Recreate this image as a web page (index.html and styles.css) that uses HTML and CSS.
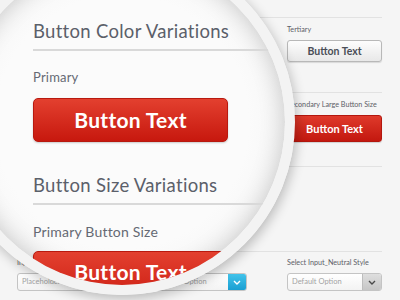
FILE: index.html
```html
<!DOCTYPE html>
<html lang="en">
<head>
    <meta charset="UTF-8">
    <meta name="viewport" content="width=device-width, initial-scale=1.0">
    <title>Button Styles</title>
    <link rel="stylesheet" href="styles.css">
</head>
<body>
    <div class="page">
        <!-- the first two columns sit under the lens -->
        <div class="row row-colors">
            <div class="field"></div>
            <div class="field"></div>
            <div class="field">
                <p class="label">Tertiary</p>
                <div class="btn btn-grey">Button Text</div>
            </div>
        </div>

        <div class="row row-sizes">
            <div class="field"></div>
            <div class="field"></div>
            <div class="field">
                <p class="label">Secondary Large Button Size</p>
                <div class="btn btn-red btn-large">Button Text</div>
            </div>
        </div>

        <div class="row row-blank"></div>

        <div class="row row-inputs">
            <div class="field">
                <p class="label">Input_Default Style</p>
                <div class="input">Placeholder Text</div>
            </div>
            <div class="field">
                <p class="label"></p>
                <div class="select">
                    <span class="select-text">Default Option</span>
                    <span class="select-arrow arrow-blue">
                        <svg width="8" height="5" viewBox="0 0 8 5"><path d="M1 1l3 3 3-3" fill="none" stroke="#fff" stroke-width="1.4"/></svg>
                    </span>
                </div>
            </div>
            <div class="field">
                <p class="label">Select Input_Neutral Style</p>
                <div class="select">
                    <span class="select-text">Default Option</span>
                    <span class="select-arrow arrow-grey">
                        <svg width="8" height="5" viewBox="0 0 8 5"><path d="M1 1l3 3 3-3" fill="none" stroke="#4a4a4a" stroke-width="1.4"/></svg>
                    </span>
                </div>
            </div>
        </div>
    </div>

    <!-- magnifying glass over the left part of the sheet -->
    <div class="lens">
        <div class="lens-view">
            <h2 class="lens-title">Button Color Variations</h2>
            <p class="lens-label">Primary</p>
            <div class="lens-btn">Button Text</div>

            <h2 class="lens-title title-second">Button Size Variations</h2>
            <p class="lens-label label-size">Primary Button Size</p>
            <div class="lens-btn lens-btn-large">Button Text</div>
        </div>
    </div>
</body>
</html>
```

FILE: styles.css
```css
body {
    margin: 0;
    padding: 0;
    width: 400px;
    height: 300px;
    overflow: hidden;
    background-color: #f5f5f5;
    font-family: Lato, "Open Sans", sans-serif;
    position: relative;
}

/* Sheet behind the lens */
.page {
    padding: 17px 18px 0 17px;
}

.row {
    display: grid;
    grid-template-columns: repeat(3, 95px);
    column-gap: 40px;
    border-top: 1px solid #e2e2e2;
    box-sizing: border-box;
}

.row-colors { height: 75px; }
.row-sizes { height: 74px; }
.row-blank { height: 85px; }

.field {
    padding-top: 7px;
}

.row-inputs .field {
    padding-top: 6px;
}

.label {
    margin: 0 0 5px;
    height: 10px;
    font-size: 7.2px;
    line-height: 10px;
    color: #5d6068;
    white-space: nowrap;
}

.btn {
    box-sizing: border-box;
    height: 22px;
    line-height: 20px;
    border-radius: 3px;
    text-align: center;
    font-size: 10.5px;
    font-weight: bold;
}

.btn-grey {
    background: linear-gradient(#fdfdfd, #e8e8e8);
    border: 1px solid #b8b8b8;
    color: #4a4e57;
    box-shadow: 0 1px 1px rgba(0, 0, 0, 0.12);
}

.btn-red {
    background: linear-gradient(#df3a2b, #c3180f);
    border: 1px solid #b3170e;
    color: #fff;
    box-shadow: 0 1px 1px rgba(0, 0, 0, 0.15);
}

.btn-large {
    height: 27px;
    line-height: 25px;
    font-size: 11px;
}

.input,
.select {
    box-sizing: border-box;
    height: 18px;
    border: 1px solid #c4c4c4;
    border-radius: 3px;
    background: linear-gradient(#ffffff, #f3f3f3);
    font-size: 7.5px;
    line-height: 16px;
    color: #a3a3a3;
    padding-left: 4px;
    white-space: nowrap;
    overflow: hidden;
}

.select {
    display: flex;
    justify-content: space-between;
    padding-left: 0;
}

.select-text {
    padding-left: 4px;
}

.select-arrow {
    width: 18px;
    display: flex;
    align-items: center;
    justify-content: center;
}

.arrow-blue {
    background: linear-gradient(#42c3ea, #1a9fd2);
}

.arrow-grey {
    background: linear-gradient(#dedede, #c6c6c6);
    border-left: 1px solid #bdbdbd;
}

/* Magnifying glass */
.lens {
    position: absolute;
    left: -51px;
    top: -51px;
    width: 346px;
    height: 346px;
    box-sizing: border-box;
    border: 10px solid #f3f3f3;
    border-radius: 50%;
    overflow: hidden;
    background: radial-gradient(circle, #fbfbfb 55%, #f2f2f2 85%, #e0e0e0 100%);
    box-shadow: 2px 4px 12px rgba(0, 0, 0, 0.24), inset 0 0 24px rgba(0, 0, 0, 0.2);
}

.lens-view {
    padding: 61px 0 0 74px;
    width: 420px;
}

.lens-title {
    margin: 0;
    padding-bottom: 7px;
    border-bottom: 2px solid #d9d9d9;
    font-size: 18.5px;
    line-height: 22px;
    font-weight: normal;
    letter-spacing: 0.3px;
    color: #5b606a;
}

.title-second {
    margin-top: 32px;
}

.lens-label {
    margin: 18px 0 13px;
    font-size: 13px;
    line-height: 16px;
    letter-spacing: 0.2px;
    color: #656973;
}

.label-size {
    font-size: 14px;
    line-height: 17px;
    margin-bottom: 11px;
}

.lens-btn {
    width: 195px;
    height: 44px;
    box-sizing: border-box;
    line-height: 42px;
    border: 1px solid #b8190f;
    border-radius: 5px;
    background: linear-gradient(#e3402f, #c7180e);
    box-shadow: 0 1px 2px rgba(0, 0, 0, 0.2);
    color: #fff;
    text-align: center;
    font-size: 21px;
    font-weight: bold;
    letter-spacing: 0.3px;
}

.lens-btn-large {
    height: 60px;
    line-height: 40px;
}
```
